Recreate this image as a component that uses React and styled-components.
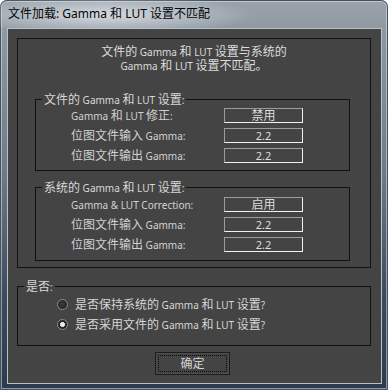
import React from 'react';
import styled, { createGlobalStyle } from 'styled-components';

const GlobalStyle = createGlobalStyle`
  html, body {
    margin: 0;
    padding: 0;
    background: #ffffff;
  }
  * {
    box-sizing: border-box;
  }
`;

const uiFont = `"Noto Sans", "Noto Sans CJK SC", sans-serif`;

const Window = styled.div`
  width: 388px;
  height: 390px;
  display: flex;
  flex-direction: column;
  border-radius: 7px 7px 1px 1px;
  background: linear-gradient(
    to bottom,
    #9aa3ab 0,
    #8d969f 40px,
    #6f7b88 170px,
    #3a495b 300px,
    #2b3a4c 100%
  );
  box-shadow: inset 0 0 0 1px #47515b, inset 0 0 0 2px rgba(220, 228, 236, 0.55);
  font-family: ${uiFont};
`;

const TitleBar = styled.div`
  height: 28px;
  flex: none;
  display: flex;
  align-items: center;
  padding-left: 8px;
  padding-bottom: 1px;
  border-radius: 7px 7px 0 0;
  background: radial-gradient(
    ellipse 150px 20px at 105px 15px,
    rgba(228, 233, 238, 0.8),
    rgba(228, 233, 238, 0) 100%
  );
  color: #050505;
  font-size: 12px;
  line-height: 14px;
  white-space: nowrap;
`;

const Client = styled.div`
  flex: 1;
  margin: 0 6px 6px 7px;
  border: 1px solid #b7c1ca;
  background: #444444;
  padding: 9px 10px 7px 9px;
  display: flex;
  flex-direction: column;
  color: #d6d6d6;
  font-size: 12px;
`;

// the dialog's Latin runs are set smaller than its 12px CJK glyphs
const Latin = styled.span`
  font-family: "Noto Sans", sans-serif;
  font-size: 10px;
`;

function Mixed({ text }) {
  return text
    .split(/([\u3000-\u9fff\uff00-\uffef]+)/)
    .filter(Boolean)
    .map((part, i) =>
      /[\u3000-\u9fff\uff00-\uffef]/.test(part) ? (
        <React.Fragment key={i}>{part}</React.Fragment>
      ) : (
        <Latin key={i}>{part}</Latin>
      )
    );
}

const MainBox = styled.div`
  border: 1px solid #121212;
  padding: 6px 20px 6px 17px;
  display: flex;
  flex-direction: column;
`;

const MessageLine = styled.div`
  margin: 0 -20px 0 -17px;
  text-align: center;
  height: 14px;
  line-height: 14px;
  color: #dcdcdc;
`;

const Group = styled.fieldset`
  margin: ${(p) => p.$top}px 0 0 0;
  padding: 0;
  border: 1px solid #111111;
  min-width: 0;
`;

const Legend = styled.legend`
  margin-left: 6px;
  padding: 0 2px;
  line-height: 15px;
  height: 15px;
  font-size: 12px;
  color: #d8d8d8;
  white-space: nowrap;
`;

const GroupBody = styled.div`
  padding: ${(p) => p.$padTop}px 0 ${(p) => p.$padBottom}px ${(p) => p.$padLeft}px;
`;

const Row = styled.div`
  display: grid;
  grid-template-columns: 153px 79px;
  height: 20px;
  padding-top: 1px;
`;

const Label = styled.span`
  line-height: 15px;
  white-space: nowrap;
  color: #d2d2d2;
`;

const Value = styled.div`
  height: 15px;
  border: 1px solid;
  border-color: #9c9c9c #f2f2f2 #f2f2f2 #9c9c9c;
  text-align: center;
  line-height: 13px;
  color: #dedede;

  ${Latin} {
    font-size: 11px;
  }
`;

const RadioRow = styled.label`
  display: flex;
  align-items: center;
  gap: 7px;
  height: 20px;
  white-space: nowrap;
  color: #d6d6d6;
`;

const RadioDot = styled.span`
  width: 11px;
  height: 11px;
  flex: none;
  border-radius: 50%;
  border: 1px solid #8c8c8c;
  background: ${(p) =>
    p.$checked
      ? 'radial-gradient(circle, #f2f2f2 0, #e0e0e0 2.2px, #262626 2.8px, #1c1c1c 100%)'
      : 'radial-gradient(circle at 40% 40%, #3a3a3a 0, #1e1e1e 100%)'};
  box-shadow: inset 0 0 0 1px #2a2a2a;
`;

const Footer = styled.div`
  display: flex;
  justify-content: center;
  margin-top: 6px;
  padding-right: 3px;
`;

const OkButton = styled.button`
  width: 75px;
  height: 23px;
  padding: 0;
  background: #444444;
  border: 1px solid #1c1c1c;
  color: #d4d4d4;
  font-family: ${uiFont};
  font-size: 12px;
  line-height: 14px;
  outline: 1px dotted #0a0a0a;
  outline-offset: -4px;
  box-shadow: inset 0 0 0 1px #4c4c4c;
`;

const fileRows = [
  ['Gamma 和 LUT 修正:', '禁用'],
  ['位图文件输入 Gamma:', '2.2'],
  ['位图文件输出 Gamma:', '2.2'],
];

const systemRows = [
  ['Gamma & LUT Correction:', '启用'],
  ['位图文件输入 Gamma:', '2.2'],
  ['位图文件输出 Gamma:', '2.2'],
];

function SettingRows({ rows }) {
  return rows.map(([label, value], i) => (
    <Row key={i}>
      <Label>
        <Mixed text={label} />
      </Label>
      <Value>
        <Mixed text={value} />
      </Value>
    </Row>
  ));
}

export default function App() {
  return (
    <>
      <GlobalStyle />
      <Window>
        <TitleBar>文件加载: Gamma 和 LUT 设置不匹配</TitleBar>
        <Client>
          <MainBox>
            <MessageLine>
              <Mixed text="文件的 Gamma 和 LUT 设置与系统的" />
            </MessageLine>
            <MessageLine>
              <Mixed text="Gamma 和 LUT 设置不匹配。" />
            </MessageLine>

            <Group $top={19}>
              <Legend>
                <Mixed text="文件的 Gamma 和 LUT 设置:" />
              </Legend>
              <GroupBody $padTop={0} $padBottom={3} $padLeft={35}>
                <SettingRows rows={fileRows} />
              </GroupBody>
            </Group>

            <Group $top={9}>
              <Legend>
                <Mixed text="系统的 Gamma 和 LUT 设置:" />
              </Legend>
              <GroupBody $padTop={1} $padBottom={4} $padLeft={35}>
                <SettingRows rows={systemRows} />
              </GroupBody>
            </Group>
          </MainBox>

          <Group $top={11}>
            <Legend>
              <Mixed text="是否:" />
            </Legend>
            <GroupBody $padTop={0} $padBottom={11} $padLeft={39}>
              <RadioRow>
                <RadioDot />
                <span>
                  <Mixed text="是否保持系统的 Gamma 和 LUT 设置?" />
                </span>
              </RadioRow>
              <RadioRow>
                <RadioDot $checked />
                <span>
                  <Mixed text="是否采用文件的 Gamma 和 LUT 设置?" />
                </span>
              </RadioRow>
            </GroupBody>
          </Group>

          <Footer>
            <OkButton type="button">确定</OkButton>
          </Footer>
        </Client>
      </Window>
    </>
  );
}
